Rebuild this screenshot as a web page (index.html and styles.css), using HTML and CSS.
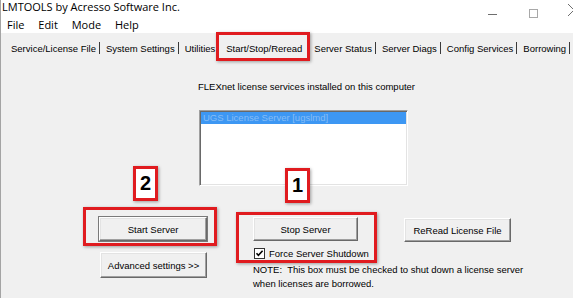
FILE: index.html
```html
<!DOCTYPE html>
<html lang="en">
<head>
    <meta charset="UTF-8">
    <title>LMTOOLS by Acresso Software Inc.</title>
    <link rel="stylesheet" href="styles.css">
</head>
<body>
    <div class="window">
        <div class="header">
            <div class="titlebar">
                <span class="title">LMTOOLS by Acresso Software Inc.</span>
                <svg class="win-btns" width="90" height="20" viewBox="0 0 90 20">
                    <line x1="5" y1="14.5" x2="14" y2="14.5" stroke="#6e6e6e" stroke-width="1"/>
                    <rect x="46.5" y="9.5" width="8" height="8" fill="none" stroke="#a8a8a8" stroke-width="1"/>
                    <line x1="85" y1="4" x2="91" y2="10" stroke="#6e6e6e" stroke-width="1"/>
                    <line x1="85" y1="16" x2="91" y2="10" stroke="#6e6e6e" stroke-width="1"/>
                </svg>
            </div>
            <div class="menubar">
                <span>File</span>
                <span>Edit</span>
                <span>Mode</span>
                <span>Help</span>
            </div>
        </div>

        <div class="tabs">
            <span class="tab">Service/License File</span>
            <span class="tab">System Settings</span>
            <span class="tab before-active">Utilities</span>
            <span class="tab active">Start/Stop/Reread</span>
            <span class="tab after-active">Server Status</span>
            <span class="tab">Server Diags</span>
            <span class="tab">Config Services</span>
            <span class="tab">Borrowing</span>
        </div>

        <div class="panel">
            <p class="caption">FLEXnet license services installed on this computer</p>
            <div class="listbox">
                <div class="item selected">UGS License Server [ugslmd]</div>
            </div>

            <div class="controls">
                <div class="col col-start">
                    <div class="marked mark-start">
                        <button class="btn default">Start Server</button>
                        <span class="badge badge-2">2</span>
                    </div>
                    <button class="btn btn-advanced">Advanced settings &gt;&gt;</button>
                </div>
                <div class="col col-stop">
                    <div class="marked mark-stop">
                        <button class="btn">Stop Server</button>
                        <label class="check">
                            <svg class="box" width="11" height="11" viewBox="0 0 11 11">
                                <rect x="0.5" y="0.5" width="10" height="10" fill="#fff" stroke="#333"/>
                                <path d="M2.5 5.2 L4.4 7.3 L8.6 2.8" fill="none" stroke="#000" stroke-width="1.6"/>
                            </svg>
                            Force Server Shutdown
                        </label>
                        <span class="badge badge-1">1</span>
                    </div>
                    <p class="note">NOTE:&nbsp; This box must be checked to shut down a license server<br>when licenses are borrowed.</p>
                </div>
                <div class="col col-reread">
                    <button class="btn btn-reread">ReRead License File</button>
                </div>
            </div>
        </div>
    </div>
</body>
</html>
```

FILE: styles.css
```css
* {
    box-sizing: border-box;
}
body {
    margin: 0;
    width: 573px;
    height: 298px;
    overflow: hidden;
    background: #f0f0f0;
    font-family: "Liberation Sans", Arial, sans-serif;
    font-size: 9.5px;
    color: #000;
}
.window {
    height: 298px;
    border-left: 1px solid #a4a4a4;
}
.header {
    background: #fff;
    font-family: "Open Sans", "Liberation Sans", sans-serif;
    font-size: 11px;
}
.titlebar {
    display: flex;
    justify-content: space-between;
    height: 14px;
}
.title {
    padding-left: 1px;
    line-height: 13px;
    white-space: nowrap;
}
.win-btns {
    flex-shrink: 0;
}
.menubar {
    height: 19px;
    padding: 3px 0 0 6px;
    line-height: 15px;
}
.menubar span {
    margin-right: 11px;
}

/* tab strip */
.tabs {
    display: flex;
    align-items: flex-start;
    height: 25px;
    padding: 9px 0 0 4px;
}
.tab {
    height: 12px;
    line-height: 13px;
    padding: 0 3px 0 6px;
    border-right: 1px solid #3a3a3a;
    white-space: nowrap;
}
.tab.before-active {
    border-right: none;
    padding-right: 11px;
}
.tab.active {
    position: relative;
    border-right: none;
    padding: 0 12px 0 0;
}
.tab.active::after {
    content: "";
    position: absolute;
    left: -10px;
    right: 4px;
    top: -10px;
    bottom: -7px;
    border: 3px solid #e01b1f;
    box-shadow: 1px 1px 3px rgba(0,0,0,0.35);
}
.tab.after-active {
    padding-left: 0;
}

/* panel */
.panel {
    padding-top: 22px;
}
.caption {
    margin: 0 0 16px 197px;
    line-height: 14px;
}
.listbox {
    margin-left: 198px;
    width: 209px;
    height: 76px;
    background: #fff;
    border: 1px solid;
    border-color: #a0a0a0 #fff #fff #a0a0a0;
    box-shadow: inset 1px 1px #696969, inset -1px -1px #e3e3e3;
    padding: 1px;
}
.item {
    height: 12px;
    line-height: 12px;
    padding-left: 2px;
    white-space: nowrap;
}
.item.selected {
    background: #3d97f3;
    color: #86bdf6;
}

.controls {
    display: flex;
    gap: 46px;
    margin-top: 31px;
    padding-left: 98px;
}
.col {
    display: flex;
    flex-direction: column;
    align-items: flex-start;
}
.col-start {
    width: 108px;
}
.col-stop {
    width: 105px;
}
.btn {
    font-family: inherit;
    font-size: 9.5px;
    color: #000;
    background: #f0f0f0;
    border: 1px solid;
    border-color: #fff #696969 #696969 #fff;
    box-shadow: inset -1px -1px #a0a0a0, inset 1px 1px #e3e3e3;
    padding: 0;
    height: 24px;
    width: 108px;
    white-space: nowrap;
}
.btn.default {
    outline: 1px solid #7a7a7a;
}
.btn-advanced {
    margin: 11px 0 0 1px;
    width: 107px;
    height: 26px;
}
.col-stop .btn {
    width: 105px;
}
.btn-reread {
    margin-top: 1px;
    width: 107px;
}

.check {
    display: flex;
    align-items: center;
    gap: 4px;
    margin: 6px 0 0 1px;
    height: 13px;
    white-space: nowrap;
}
.check .box {
    flex-shrink: 0;
}
.note {
    margin: 3px 0 0;
    line-height: 14px;
    white-space: nowrap;
}

/* red call-out marks */
.marked {
    position: relative;
}
.marked::after {
    content: "";
    position: absolute;
    border: 3px solid #e01b1f;
    box-shadow: 1px 1px 3px rgba(0,0,0,0.35);
    pointer-events: none;
}
.mark-start::after {
    left: -16px;
    right: -10px;
    top: -10px;
    bottom: -5px;
}
.mark-stop {
    width: 105px;
}
.mark-stop::after {
    left: -17px;
    right: -19px;
    top: -5px;
    bottom: -3px;
}
.badge {
    position: absolute;
    width: 25px;
    height: 35px;
    top: -51px;
    background: #fff;
    border: 3px solid #e01b1f;
    box-shadow: 1px 1px 3px rgba(0,0,0,0.35);
    font-family: "Liberation Sans", Arial, sans-serif;
    font-weight: bold;
    font-size: 20px;
    line-height: 29px;
    text-align: center;
}
.badge-2 {
    left: 34px;
}
.badge-1 {
    left: 32px;
    top: -49px;
}
```
